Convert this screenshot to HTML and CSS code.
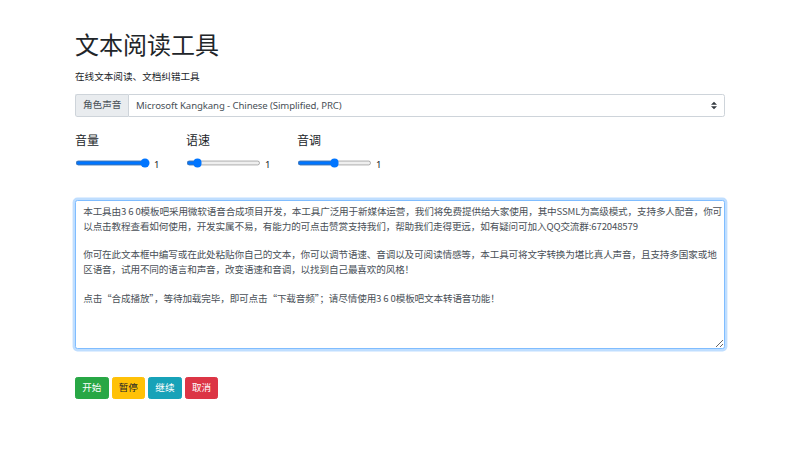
FILE: index.html
```html
<!DOCTYPE html>
<html lang="zh-CN">
<head>
<meta charset="utf-8">
<title>文本阅读工具</title>
<link rel="stylesheet" href="styles.css">
</head>
<body>
<div class="container">
  <h1 class="title">文本阅读工具</h1>
  <p class="subtitle">在线文本阅读、文档纠错工具</p>

  <div class="input-group">
    <span class="prepend">角色声音</span>
    <div class="select-wrap">
      <select class="custom-select">
        <option>Microsoft Kangkang - Chinese (Simplified, PRC)</option>
      </select>
      <svg class="select-arrow" width="6" height="9" viewBox="0 0 4 5"><path d="M2 0L0 2h4zm0 5L0 3h4z" fill="#343a40"/></svg>
    </div>
  </div>

  <div class="controls">
    <div class="control">
      <label class="control-label">音量</label>
      <div class="control-row">
        <input type="range" min="0" max="1" step="0.1" value="1">
        <span class="value">1</span>
      </div>
    </div>
    <div class="control">
      <label class="control-label">语速</label>
      <div class="control-row">
        <input type="range" min="0" max="10" step="0.1" value="1">
        <span class="value">1</span>
      </div>
    </div>
    <div class="control">
      <label class="control-label">音调</label>
      <div class="control-row">
        <input type="range" min="0" max="2" step="0.1" value="1">
        <span class="value">1</span>
      </div>
    </div>
  </div>

  <textarea class="text-input" wrap="off">本工具由3 6 0模板吧采用微软语音合成项目开发，本工具广泛用于新媒体运营，我们将免费提供给大家使用，其中SSML为高级模式，支持多人配音，你可
以点击教程查看如何使用，开发实属不易，有能力的可点击赞赏支持我们，帮助我们走得更远，如有疑问可加入QQ交流群:672048579

你可在此文本框中编写或在此处粘贴你自己的文本，你可以调节语速、音调以及可阅读情感等，本工具可将文字转换为堪比真人声音，且支持多国家或地
区语音，试用不同的语言和声音，改变语速和音调，以找到自己最喜欢的风格！

点击“合成播放”，等待加载完毕，即可点击“下载音频”；请尽情使用3 6 0模板吧文本转语音功能！</textarea>

  <div class="buttons">
    <button class="btn btn-success">开始</button>
    <button class="btn btn-warning">暂停</button>
    <button class="btn btn-info">继续</button>
    <button class="btn btn-danger">取消</button>
  </div>
</div>
</body>
</html>
```

FILE: styles.css
```css
* { box-sizing: border-box; }

body {
  margin: 0;
  background: #fff;
  color: #212529;
  font-family: "Noto Sans", "Noto Sans CJK SC", sans-serif;
  font-size: 9.6px;
  line-height: 1.5;
}

.container {
  width: 650px;
  margin: 0 auto;
  padding-top: 30px;
}

.title {
  margin: 0;
  font-size: 24px;
  font-weight: 400;
  line-height: 1.2;
  font-family: "Noto Sans CJK SC", sans-serif;
}

.subtitle {
  margin: 11px 0 9.6px;
  font-size: 9.6px;
  line-height: 14.4px;
  color: #212529;
}

.input-group {
  display: flex;
  height: 22.8px;
}

.prepend {
  display: flex;
  align-items: center;
  padding: 0 7px;
  width: 53px;
  background: #e9ecef;
  border: 1px solid #ced4da;
  border-right: 0;
  border-radius: 2.4px 0 0 2.4px;
  color: #495057;
  font-size: 9.6px;
  white-space: nowrap;
}

.select-wrap {
  position: relative;
  flex: 1;
}

.custom-select {
  appearance: none;
  -webkit-appearance: none;
  width: 100%;
  height: 100%;
  margin: 0;
  padding: 0 20px 0 7px;
  border: 1px solid #ced4da;
  border-radius: 0 2.4px 2.4px 0;
  background: #fff;
  color: #495057;
  font-family: "Noto Sans", "Noto Sans CJK SC", sans-serif;
  font-size: 9.6px;
  letter-spacing: -0.1px;
  outline: none;
}

.select-arrow {
  position: absolute;
  right: 8px;
  top: 7px;
  pointer-events: none;
}

.controls {
  display: flex;
  margin-top: 17px;
}

.control {
  width: 111px;
}

.control-label {
  display: block;
  font-size: 12px;
  line-height: 14.4px;
  color: #212529;
  margin-bottom: 8px;
}

.control-row {
  display: flex;
  align-items: center;
}

.control-row input[type="range"] {
  zoom: 0.6;
  width: 125px;
  margin: 2px 0;
}

.value {
  margin-left: 4px;
  margin-top: 4px;
  font-size: 9.6px;
  line-height: 1;
}

.text-input {
  display: block;
  width: 100%;
  height: 149px;
  margin-top: 30px;
  padding: 3.6px 7.2px;
  border: 1px solid #80bdff;
  border-radius: 2.4px;
  box-shadow: 0 0 0 2.4px rgba(0, 123, 255, 0.25);
  color: #495057;
  font-family: "Noto Sans CJK SC", sans-serif;
  font-size: 9.6px;
  line-height: 14.4px;
  letter-spacing: -0.14px;
  white-space: pre;
  overflow: hidden;
  outline: none;
  resize: vertical;
}

.buttons {
  display: flex;
  gap: 3px;
  margin-top: 28px;
}

.btn {
  height: 22.8px;
  padding: 0 6.2px;
  border: 1px solid transparent;
  border-radius: 2.4px;
  font-family: "Noto Sans CJK SC", sans-serif;
  font-size: 9.6px;
  line-height: 1;
  color: #fff;
}

.btn-success { background: #28a745; border-color: #28a745; }
.btn-warning { background: #ffc107; border-color: #ffc107; color: #212529; }
.btn-info { background: #17a2b8; border-color: #17a2b8; }
.btn-danger { background: #dc3545; border-color: #dc3545; }
```
